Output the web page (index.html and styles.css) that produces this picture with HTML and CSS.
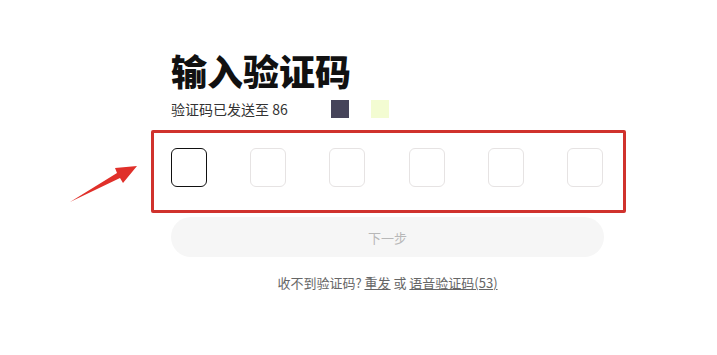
FILE: index.html
```html
<!DOCTYPE html>
<html lang="zh-CN">
<head>
    <meta charset="UTF-8">
    <title>输入验证码</title>
    <link rel="stylesheet" href="styles.css">
</head>
<body>
    <div class="panel">
        <h1 class="title">输入验证码</h1>
        <div class="sub">
            <span>验证码已发送至 86</span>
            <span class="mask mask-dark"></span>
            <span class="mask mask-light"></span>
        </div>

        <div class="code-row">
            <div class="code-box active"></div>
            <div class="code-box"></div>
            <div class="code-box"></div>
            <div class="code-box"></div>
            <div class="code-box"></div>
            <div class="code-box"></div>
        </div>

        <button class="next-btn" disabled>下一步</button>

        <p class="resend">收不到验证码? <a href="#">重发</a> 或 <a href="#">语音验证码(53)</a></p>
    </div>

    <!-- annotation -->
    <div class="mark-box"></div>
    <svg class="mark-arrow" width="717" height="355" viewBox="0 0 717 355">
        <polygon points="70,202 117,173 115,168 137,166 123,183 120,178" fill="#e0302a"/>
    </svg>
</body>
</html>
```

FILE: styles.css
```css
body {
    margin: 0;
    background: #fff;
    font-family: "Noto Sans CJK SC", "Noto Sans", sans-serif;
    color: #333;
}

.panel {
    width: 433px;
    margin-left: 171px;
    padding-top: 48px;
}

.title {
    margin: 0;
    font-size: 36px;
    line-height: 44px;
    font-weight: 900;
    color: #111;
}

.sub {
    display: flex;
    align-items: center;
    height: 22px;
    margin-top: 6px;
    font-size: 14px;
    color: #333;
}

.mask {
    display: inline-block;
    width: 18px;
    height: 18px;
}

.mask-dark {
    margin-left: 43px;
    background: #46445a;
}

.mask-light {
    margin-left: 22px;
    background: #f3fcd2;
}

.code-row {
    display: flex;
    justify-content: space-between;
    margin-top: 28px;
    width: 432px;
}

.code-box {
    width: 34px;
    height: 37px;
    border: 1px solid #e6e3e3;
    border-radius: 6px;
    background: #fff;
}

.code-box.active {
    border-color: #111;
}

.next-btn {
    display: block;
    width: 433px;
    height: 40px;
    margin-top: 30px;
    border: none;
    border-radius: 20px;
    background: #f6f6f6;
    color: #b8b8b8;
    font-family: inherit;
    font-size: 13px;
}

.resend {
    margin: 17px 0 0;
    text-align: center;
    font-size: 13px;
    line-height: 18px;
    color: #666;
}

.resend a {
    color: #666;
    text-decoration: underline;
}

.mark-box {
    position: absolute;
    left: 151px;
    top: 130px;
    width: 469px;
    height: 77px;
    border: 3px solid #d0322d;
    border-radius: 2px;
}

.mark-arrow {
    position: absolute;
    left: 0;
    top: 0;
}
```
